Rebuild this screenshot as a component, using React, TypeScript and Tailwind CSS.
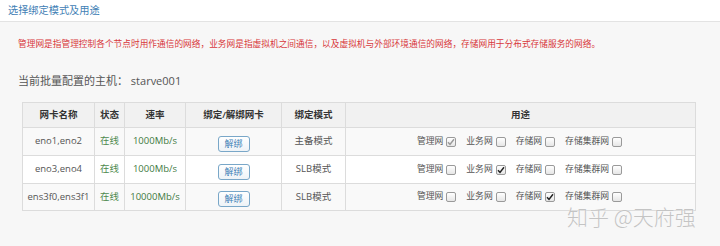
import React from "react";

const FONT = { fontFamily: '"Open Sans", "Noto Sans CJK SC", sans-serif' };

function Box({ checked, dim }: { checked?: boolean; dim?: boolean }) {
  return (
    <span className="inline-flex w-[10px] h-[10px] border border-[#9a9a9a] rounded-[2px] bg-gradient-to-b from-white to-[#e6e6e6] items-center justify-center align-middle ml-[3px] mr-[10px]">
      {checked && (
        <svg width="8" height="8" viewBox="0 0 8 8">
          <path d="M1 4.2 L3 6.4 L7 1.2" fill="none" stroke={dim ? "#9a9a9a" : "#222"} strokeWidth="1.5" />
        </svg>
      )}
    </span>
  );
}

const rows = [
  { name: "eno1,eno2", speed: "1000Mb/s", mode: "主备模式", checked: 0, dim: true, bg: "bg-[#f9f9f9]", h: "h-[28px]" },
  { name: "eno3,eno4", speed: "1000Mb/s", mode: "SLB模式", checked: 1, dim: false, bg: "bg-white", h: "h-[28px]" },
  { name: "ens3f0,ens3f1", speed: "10000Mb/s", mode: "SLB模式", checked: 2, dim: false, bg: "bg-[#f9f9f9]", h: "h-[27px]" },
];

const uses = ["管理网", "业务网", "存储网", "存储集群网"];

export default function App() {
  return (
    <div className="w-[720px] h-[246px] bg-[#f7f7f7] relative overflow-hidden" style={FONT}>
      <div className="h-[22px] bg-white border-b border-[#e3e3e3] flex items-center pl-[8px]">
        <span className="text-[10.2px] text-[#3f80b5] leading-none">选择绑定模式及用途</span>
      </div>
      <div className="pl-[18px] pt-[17px] text-[8.7px] text-[#d8373b] leading-[10px] whitespace-nowrap">
        管理网是指管理控制各个节点时用作通信的网络，业务网是指虚拟机之间通信，以及虚拟机与外部环境通信的网络，存储网用于分布式存储服务的网络。
      </div>
      <div className="pl-[18px] pt-[25px] text-[11px] text-[#555] leading-[14px] whitespace-nowrap">
        当前批量配置的主机： starve001
      </div>
      <div className="pl-[22px] pt-[14px]">
        <table className="w-[673px] border-collapse table-fixed text-[9.5px] text-[#555]">
          <colgroup>
            <col className="w-[72px]" />
            <col className="w-[30px]" />
            <col className="w-[61px]" />
            <col className="w-[96px]" />
            <col className="w-[64px]" />
            <col className="w-[350px]" />
          </colgroup>
          <thead>
            <tr className="h-[25px] bg-[#f1f1f1] text-[#333]">
              {["网卡名称", "状态", "速率", "绑定/解绑网卡", "绑定模式", "用途"].map((h) => (
                <th key={h} className="border border-[#dcdcdc] text-center p-0 font-semibold">
                  {h}
                </th>
              ))}
            </tr>
          </thead>
          <tbody>
            {rows.map((r, i) => (
              <tr key={i} className={`${r.h} ${r.bg}`}>
                <td className="border border-[#dcdcdc] text-center p-0 whitespace-nowrap">{r.name}</td>
                <td className="border border-[#dcdcdc] text-center p-0 text-[#4e8a4e]">在线</td>
                <td className="border border-[#dcdcdc] text-center p-0 text-[#3f7a3f] whitespace-nowrap">{r.speed}</td>
                <td className="border border-[#dcdcdc] text-center p-0">
                  <span className="inline-flex w-[32px] h-[16px] mt-[4px] items-center justify-center border border-[#79a7c8] rounded-[3px] bg-gradient-to-b from-white to-[#eef3f7] text-[#3f80b5] text-[9px]">
                    解绑
                  </span>
                </td>
                <td className="border border-[#dcdcdc] text-center p-0 whitespace-nowrap">{r.mode}</td>
                <td className="border border-[#dcdcdc] p-0">
                  <div className="flex items-center justify-center pl-[8px] text-[8.8px] whitespace-nowrap">
                    {uses.map((u, j) => (
                      <span key={u} className="inline-flex items-center">
                        {u}
                        <Box checked={j === r.checked} dim={r.dim && j === r.checked} />
                      </span>
                    ))}
                  </div>
                </td>
              </tr>
            ))}
          </tbody>
        </table>
      </div>
      <div
        className="absolute left-[567px] top-[206px] text-[21px] text-[#c4c4c4] font-light leading-none whitespace-nowrap"
        style={{ fontFamily: '"Noto Sans CJK SC", sans-serif', textShadow: "0 0 1px #ffffff" }}
      >
        知乎 @天府强
      </div>
    </div>
  );
}
